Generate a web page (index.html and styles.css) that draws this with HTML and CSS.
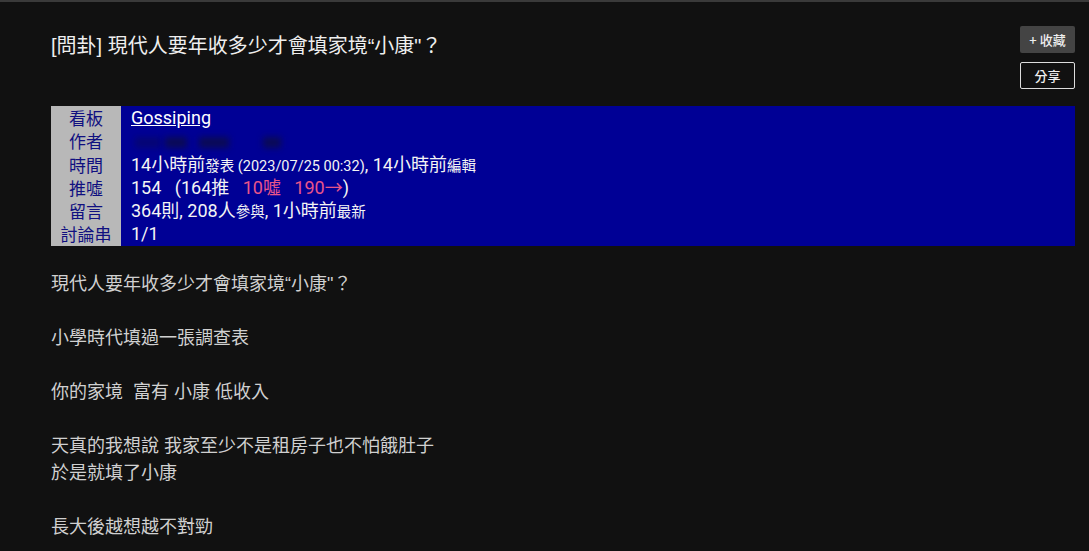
FILE: index.html
```html
<!DOCTYPE html>
<html lang="zh-Hant">
<head>
    <meta charset="UTF-8">
    <meta name="viewport" content="width=device-width, initial-scale=1.0">
    <title>[問卦] 現代人要年收多少才會填家境“小康"？</title>
    <link rel="stylesheet" href="styles.css">
</head>
<body>

    <div class="topbar"></div>

    <div class="article">
        <div class="article-header">
            <h1 class="article-title">[問卦] 現代人要年收多少才會填家境“小康"？</h1>
            <div class="article-actions">
                <button class="btn btn-fav">+ 收藏</button>
                <button class="btn btn-share">分享</button>
            </div>
        </div>

        <div class="meta">
            <div class="meta-row">
                <span class="meta-label">看板</span>
                <span class="meta-value"><a href="#" class="board-link">Gossiping</a></span>
            </div>
            <div class="meta-row">
                <span class="meta-label">作者</span>
                <span class="meta-value author">
                    <span class="smudge s1"></span>
                    <span class="smudge s2"></span>
                    <span class="smudge s3"></span>
                    <span class="smudge s4"></span>
                </span>
            </div>
            <div class="meta-row">
                <span class="meta-label">時間</span>
                <span class="meta-value">14小時前<small>發表 (2023/07/25 00:32)</small>, 14小時前<small>編輯</small></span>
            </div>
            <div class="meta-row">
                <span class="meta-label">推噓</span>
                <span class="meta-value">154 &nbsp; (164推 &nbsp; <span class="boo">10噓 &nbsp; 190→</span>)</span>
            </div>
            <div class="meta-row">
                <span class="meta-label">留言</span>
                <span class="meta-value">364則, 208人<small>參與</small>, 1小時前<small>最新</small></span>
            </div>
            <div class="meta-row">
                <span class="meta-label">討論串</span>
                <span class="meta-value">1/1</span>
            </div>
        </div>

        <div class="article-body">現代人要年收多少才會填家境“小康"？

小學時代填過一張調查表

你的家境  富有 小康 低收入

天真的我想說 我家至少不是租房子也不怕餓肚子
於是就填了小康

長大後越想越不對勁</div>
    </div>

</body>
</html>
```

FILE: styles.css
```css
html, body {
    margin: 0;
    padding: 0;
    height: 100%;
    overflow: hidden;
    background: #111111;
}

body {
    font-family: "Liberation Sans", "Noto Sans CJK TC", sans-serif;
    color: #cccccc;
}

.topbar {
    height: 2px;
    background: #3a3a3a;
}

.article {
    padding: 24px 14px 0 51px;
}

.article-header {
    display: flex;
    justify-content: space-between;
    align-items: flex-start;
}

.article-title {
    margin: 6px 0 0;
    font-size: 20px;
    font-weight: normal;
    line-height: 28px;
    color: #eeeeee;
}

.article-actions {
    display: flex;
    flex-direction: column;
    gap: 9px;
}

.btn {
    width: 55px;
    height: 27px;
    padding: 0;
    font-family: "Noto Sans CJK TC", sans-serif;
    font-size: 13px;
    font-weight: 500;
    color: #eeeeee;
    cursor: pointer;
}

.btn-fav {
    background: #444444;
    border: none;
    border-radius: 2px;
}

.btn-share {
    background: transparent;
    border: 1px solid #dddddd;
    border-radius: 2px;
}

.meta {
    margin-top: 17px;
    background: #000095;
}

.meta-row {
    display: flex;
    height: 23.3px;
    line-height: 23px;
    font-size: 18px;
}

.meta-label {
    width: 70px;
    flex-shrink: 0;
    background: #b8b8b8;
    color: #101080;
    text-align: center;
    font-family: "Noto Sans CJK TC", sans-serif;
    font-size: 17px;
}

.meta-value {
    padding-left: 10px;
    font-family: Roboto, "Noto Sans CJK TC", sans-serif;
    color: #f4f4f4;
}

.meta-value small {
    font-size: 14.5px;
}

.board-link {
    color: #ffffff;
}

.boo {
    color: #e8558a;
}

/* 作者欄被塗抹掉 */
.author {
    position: relative;
    flex: 1;
}

.smudge {
    position: absolute;
    top: 8px;
    height: 11px;
    background: #0a0a55;
    filter: blur(3px);
}

.s1 { left: 14px; width: 26px; opacity: 0.5; }
.s2 { left: 44px; width: 22px; }
.s3 { left: 78px; width: 30px; }
.s4 { left: 142px; width: 18px; }

.article-body {
    margin-top: 25px;
    white-space: pre-wrap;
    font-size: 18px;
    line-height: 27px;
    color: #d0d0d0;
}
```
